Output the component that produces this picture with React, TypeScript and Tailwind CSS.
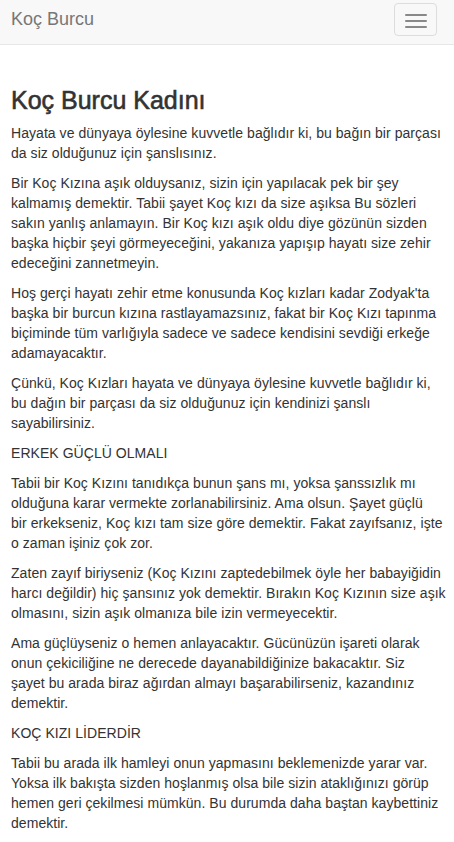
import React from "react";

const paras: string[][] = [
  [
    "Hayata ve dünyaya öylesine kuvvetle bağlıdır ki, bu bağın bir parçası",
    "da siz olduğunuz için şanslısınız.",
  ],
  [
    "Bir Koç Kızına aşık olduysanız, sizin için yapılacak pek bir şey",
    "kalmamış demektir. Tabii şayet Koç kızı da size aşıksa Bu sözleri",
    "sakın yanlış anlamayın. Bir Koç kızı aşık oldu diye gözünün sizden",
    "başka hiçbir şeyi görmeyeceğini, yakanıza yapışıp hayatı size zehir",
    "edeceğini zannetmeyin.",
  ],
  [
    "Hoş gerçi hayatı zehir etme konusunda Koç kızları kadar Zodyak'ta",
    "başka bir burcun kızına rastlayamazsınız, fakat bir Koç Kızı tapınma",
    "biçiminde tüm varlığıyla sadece ve sadece kendisini sevdiği erkeğe",
    "adamayacaktır.",
  ],
  [
    "Çünkü, Koç Kızları hayata ve dünyaya öylesine kuvvetle bağlıdır ki,",
    "bu dağın bir parçası da siz olduğunuz için kendinizi şanslı",
    "sayabilirsiniz.",
  ],
  ["ERKEK GÜÇLÜ OLMALI"],
  [
    "Tabii bir Koç Kızını tanıdıkça bunun şans mı, yoksa şanssızlık mı",
    "olduğuna karar vermekte zorlanabilirsiniz. Ama olsun. Şayet güçlü",
    "bir erkekseniz, Koç kızı tam size göre demektir. Fakat zayıfsanız, işte",
    "o zaman işiniz çok zor.",
  ],
  [
    "Zaten zayıf biriyseniz (Koç Kızını zaptedebilmek öyle her babayiğidin",
    "harcı değildir) hiç şansınız yok demektir. Bırakın Koç Kızının size aşık",
    "olmasını, sizin aşık olmanıza bile izin vermeyecektir.",
  ],
  [
    "Ama güçlüyseniz o hemen anlayacaktır. Gücünüzün işareti olarak",
    "onun çekiciliğine ne derecede dayanabildiğinize bakacaktır. Siz",
    "şayet bu arada biraz ağırdan almayı başarabilirseniz, kazandınız",
    "demektir.",
  ],
  ["KOÇ KIZI LİDERDİR"],
  [
    "Tabii bu arada ilk hamleyi onun yapmasını beklemenizde yarar var.",
    "Yoksa ilk bakışta sizden hoşlanmış olsa bile sizin ataklığınızı görüp",
    "hemen geri çekilmesi mümkün. Bu durumda daha baştan kaybettiniz",
    "demektir.",
  ],
];

export default function App() {
  return (
    <div
      className="min-h-screen bg-white text-[#333] text-[14px] leading-[20px]"
      style={{ fontFamily: '"Liberation Sans", Arial, sans-serif' }}
    >
      <nav className="h-[45px] bg-[#f8f8f8] border-b border-[#e7e7e7] flex items-start justify-between pl-[11px] pr-[17px]">
        <span className="text-[18px] leading-[20px] text-[#777] pt-[9px]">Koç Burcu</span>
        <button className="mt-[3px] w-[43px] h-[33px] border border-[#ddd] rounded-[4px] flex flex-col items-center justify-center gap-[4px] pt-[2px]">
          <span className="block w-[22px] h-[2px] bg-[#888] rounded-[1px]" />
          <span className="block w-[22px] h-[2px] bg-[#888] rounded-[1px]" />
          <span className="block w-[22px] h-[2px] bg-[#888] rounded-[1px]" />
        </button>
      </nav>
      <main className="px-[11px] pt-[42px]">
        <h3 className="text-[25px] leading-[26.4px] font-normal text-[#333] mb-[10px] [-webkit-text-stroke:0.6px_#333]">
          Koç Burcu Kadını
        </h3>
        {paras.map((lines, i) => (
          <p key={i} className="mb-[10px] whitespace-nowrap tracking-[0.05px]">
            {lines.map((l, j) => (
              <React.Fragment key={j}>
                {l}
                {j < lines.length - 1 && <br />}
              </React.Fragment>
            ))}
          </p>
        ))}
      </main>
    </div>
  );
}
